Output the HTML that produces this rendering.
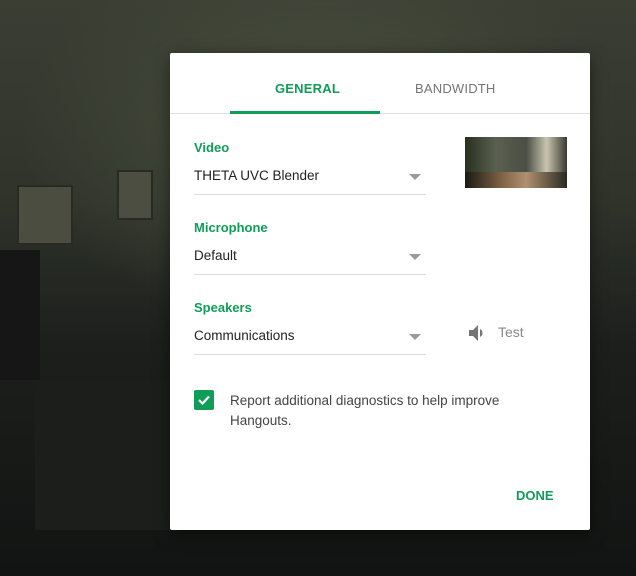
<!DOCTYPE html>
<html><head><style>
body{margin:0;width:636px;height:576px;overflow:hidden;position:relative;font-family:"Liberation Sans",sans-serif;
background:radial-gradient(ellipse 300px 200px at 320px 130px,#4a5040 0%,rgba(60,64,50,0) 100%),linear-gradient(180deg,#3a3e33 0%,#2f332a 35%,#1c1f1c 60%,#121413 100%);}
.d{position:absolute;left:170px;top:53px;width:420px;height:477px;background:#fff;border-radius:2px;box-shadow:0 4px 16px rgba(0,0,0,.5)}
.t{position:absolute;top:28px;font-size:13px;font-weight:bold;letter-spacing:.2px}
.hr{position:absolute;left:0;right:0;top:60px;height:1px;background:#e0e0e0}
.ul{position:absolute;left:60px;width:150px;top:58px;height:3px;background:#0f9d58}
.lab{position:absolute;left:24px;color:#0f9d58;font-size:13px;font-weight:bold}
.val{position:absolute;left:24px;color:#222;font-size:13.5px}
.line{position:absolute;left:24px;width:232px;height:1px;background:#ddd}
.ar{position:absolute;left:239px;width:0;height:0;border-left:6px solid transparent;border-right:6px solid transparent;border-top:6px solid #999}
</style></head><body>
<div style="position:absolute;left:17px;top:185px;width:52px;height:56px;background:#4a4d40;border:2px solid #2a2a22"></div>
<div style="position:absolute;left:117px;top:170px;width:32px;height:46px;background:#4b4e40;border:2px solid #2a2a22"></div>
<div style="position:absolute;left:0;top:250px;width:40px;height:130px;background:#151615"></div>
<div style="position:absolute;left:35px;top:380px;width:135px;height:150px;background:#1c1e1c"></div>
<div class="d">
<div class="t" style="left:105px;color:#0f9d58">GENERAL</div>
<div class="t" style="left:245px;color:#757575;font-weight:normal">BANDWIDTH</div>
<div class="hr"></div><div class="ul"></div>
<div class="lab" style="top:87px">Video</div>
<div class="val" style="top:115px">THETA UVC Blender</div>
<div class="ar" style="top:121px"></div>
<div class="line" style="top:141px"></div>
<div style="position:absolute;left:295px;top:84px;width:102px;height:51px;background:linear-gradient(90deg,#2a3020,#5a6050 30%,#4a4e44 60%,#c8c4b0 80%,#3a3a30);"><div style="position:absolute;left:0;right:0;bottom:0;height:16px;background:linear-gradient(90deg,#1a1a14,#8a6a4a 40%,#b09070 60%,#2a2a22)"></div></div>
<div class="lab" style="top:167px">Microphone</div>
<div class="val" style="top:195px">Default</div>
<div class="ar" style="top:201px"></div>
<div class="line" style="top:221px"></div>
<div class="lab" style="top:247px">Speakers</div>
<div class="val" style="top:275px">Communications</div>
<div class="ar" style="top:281px"></div>
<div class="line" style="top:301px"></div>
<svg style="position:absolute;left:296px;top:268px" width="24" height="24" viewBox="0 0 24 24"><path fill="#757575" d="M3 9v6h4l5 5V4L7 9H3zm13.5 3A4.5 4.5 0 0 0 14 7.97v8.05A4.47 4.47 0 0 0 16.5 12z"/></svg>
<div style="position:absolute;left:328px;top:271px;color:#888;font-size:14px">Test</div>
<div style="position:absolute;left:24px;top:337px;width:20px;height:20px;background:#0f9d58;border-radius:2px"><svg width="20" height="20" viewBox="0 0 20 20"><path d="M5 10l3.5 3.5L15 6.5" stroke="#fff" stroke-width="2.2" fill="none"/></svg></div>
<div style="position:absolute;left:60px;top:338px;width:320px;color:#444;font-size:13.5px;line-height:20px">Report additional diagnostics to help improve Hangouts.</div>
<div style="position:absolute;left:346px;top:435px;color:#0f9d58;font-size:13px;font-weight:bold">DONE</div>
</div>
</body></html>
